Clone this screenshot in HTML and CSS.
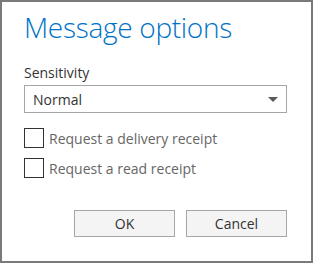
FILE: index.html
```html
<!DOCTYPE html>
<html>
<head>
<meta charset="utf-8">
<link rel="stylesheet" href="styles.css">
</head>
<body>
<div class="dialog">
  <h1 class="title">Message options</h1>
  <div class="field-label">Sensitivity</div>
  <div class="select">
    <span class="select-value">Normal</span>
    <svg class="select-arrow" width="10" height="5" viewBox="0 0 10 5"><path d="M0 0H10L5 5Z" fill="#5a5a5a"/></svg>
  </div>
  <div class="checks">
    <label class="check"><span class="box"></span><span class="check-text">Request a delivery receipt</span></label>
    <label class="check"><span class="box"></span><span class="check-text">Request a read receipt</span></label>
  </div>
  <div class="actions">
    <button class="btn">OK</button>
    <button class="btn">Cancel</button>
  </div>
</div>
</body>
</html>
```
FILE: styles.css
```css
html, body {
  margin: 0;
  padding: 0;
  background: #ffffff;
}
.dialog {
  box-sizing: border-box;
  width: 313px;
  height: 263px;
  border: 2px solid #7a7a7a;
  padding: 0 24px 0 22px;
  font-family: "Open Sans", "Segoe UI", sans-serif;
  color: #333333;
  display: flex;
  flex-direction: column;
}
.title {
  margin: 6px 0 0 0;
  font-size: 28px;
  font-weight: 300;
  line-height: 38px;
  color: #0072c6;
  letter-spacing: -0.3px;
}
.field-label {
  margin-top: 18px;
  font-size: 14px;
  line-height: 18px;
  color: #333333;
}
.select {
  box-sizing: border-box;
  margin-top: 3px;
  height: 28px;
  border: 1px solid #a6a6a6;
  display: flex;
  align-items: center;
  justify-content: space-between;
  padding: 0 8px 0 8px;
}
.select-value {
  font-size: 14px;
  color: #333333;
}
.select-arrow {
  display: block;
}
.checks {
  display: flex;
  flex-direction: column;
  gap: 10px;
  margin-top: 15px;
}
.check {
  display: flex;
  align-items: center;
  gap: 5px;
  height: 20px;
}
.box {
  box-sizing: border-box;
  width: 20px;
  height: 20px;
  border: 1px solid #333333;
  background: #ffffff;
}
.check-text {
  font-size: 14px;
  color: #666666;
}
.actions {
  display: flex;
  justify-content: flex-end;
  gap: 11px;
  margin-top: 32px;
}
.btn {
  box-sizing: border-box;
  width: 101px;
  height: 27px;
  border: 1px solid #a6a6a6;
  background: #f4f4f4;
  font-family: "Open Sans", "Segoe UI", sans-serif;
  font-size: 14px;
  color: #333333;
  padding: 0;
  margin: 0;
}
```
